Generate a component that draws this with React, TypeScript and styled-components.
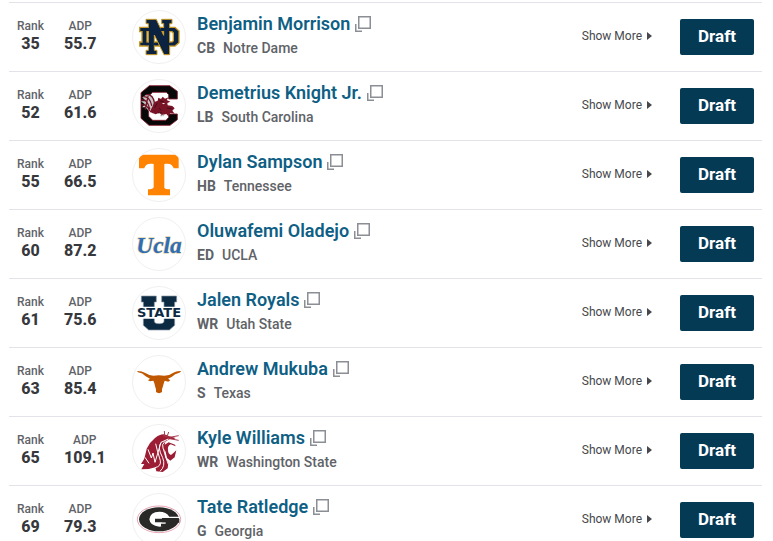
import React from "react";
import styled, { createGlobalStyle } from "styled-components";

const GlobalStyle = createGlobalStyle`
  * { box-sizing: border-box; }
  body {
    margin: 0;
    background: #fff;
    color: #5f6368;
    font-family: Roboto, "Liberation Sans", sans-serif;
  }
`;

const PlayerList = styled.ul`
  list-style: none;
  margin: 0;
  padding: 2px 11px 0 9px;
`;

const PlayerRow = styled.li`
  display: flex;
  align-items: center;
  height: 69px;
  border-top: 1px solid #e1e3e8;
`;

const Stats = styled.dl`
  display: flex;
  gap: 20px;
  width: 123px;
  margin: 0;
  padding: 0 0 2px 8px;
`;

const Stat = styled.div`
  text-align: center;
`;

const StatLabel = styled.dt`
  font-size: 12px;
  font-weight: 500;
  line-height: 16px;
`;

const StatValue = styled.dd`
  margin: 0;
  font-size: 16px;
  font-weight: 800;
  line-height: 20px;
  color: #36383c;
`;

const LogoCircle = styled.svg`
  flex: none;
  width: 54px;
  height: 54px;
  border: 1px solid #f0f0f1;
  border-radius: 50%;
`;

const Details = styled.div`
  flex: 1;
  min-width: 0;
  padding: 0 0 2px 11px;
`;

const NameLine = styled.div`
  display: flex;
  align-items: center;
  gap: 5px;
  height: 24px;
`;

const Name = styled.a`
  font-size: 18px;
  font-weight: 600;
  line-height: 24px;
  color: #0f5f85;
  text-decoration: none;
  white-space: nowrap;
`;

const PopoutButton = styled.button`
  display: flex;
  padding: 0;
  border: 0;
  background: none;
  color: #8b8e94;
  cursor: pointer;
`;

const SchoolLine = styled.div`
  display: flex;
  gap: 8px;
  font-size: 14px;
  font-weight: 500;
  line-height: 24px;
`;

const Position = styled.span`
  font-weight: 700;
`;

const ShowMore = styled.button`
  display: flex;
  align-items: center;
  gap: 5px;
  margin-right: 28px;
  padding: 0 0 2px;
  border: 0;
  background: none;
  color: #46484c;
  font: 400 12px/16px Roboto, "Liberation Sans", sans-serif;
  cursor: pointer;
`;

const DraftButton = styled.button`
  width: 74px;
  height: 36px;
  margin-right: 8px;
  padding: 0 0 2px;
  border: 0;
  border-radius: 2px;
  background: #053a55;
  color: #fff;
  font: 700 17px/20px Roboto, "Liberation Sans", sans-serif;
  cursor: pointer;
`;

const LogoWord = styled.text<{ $script?: boolean }>`
  font-family: ${(p) => (p.$script ? '"Liberation Serif", serif' : '"DejaVu Sans", sans-serif')};
  font-size: ${(p) => (p.$script ? "70px" : "39px")};
  font-style: ${(p) => (p.$script ? "italic" : "normal")};
  font-weight: 700;
  text-anchor: middle;
  paint-order: stroke;
`;

const NotreDame = () => (
  <>
    <path
      fill="#0b2341"
      stroke="#c99a25"
      strokeWidth="4"
      fillRule="evenodd"
      d="M32 64H138L150 75V110L138 120H32V108H39V77H32ZM54 77V108H129L133 104V81L129 77Z"
    />
    <path
      fill="#0b2341"
      stroke="#c99a25"
      strokeWidth="3"
      d="M51 40H82L104 88V53H98V40H129V53H122V146H105L76 87V133H84V146H51V133H58V53H51Z"
    />
    <path fill="#0b2341" d="M50 66H64V75H50ZM50 110H64V118H50ZM74 110H86V118H74ZM112 110H138V118H112ZM94 66H138V75H94Z" />
  </>
);

const SouthCarolina = () => (
  <>
    <path fill="#080808" stroke="#881b2c" strokeWidth="2.5" d="M61 32H122L145 49V72H119V59L112 52H71L59 63V124L71 136H111L119 127V117H145V134L123 151H60L36 130V53Z" />
    <path fill="#c8c4c6" d="M40 67L54 58L71 62L77 76L74 116L62 110L49 97L39 97L48 88L36 79L51 79Z" />
    <g fill="none" stroke="#761427" strokeWidth="4" strokeLinecap="round">
      <path d="M52 59Q71 57 76 82L72 113M44 65Q62 65 68 91M39 75Q54 72 62 101M39 90Q54 88 61 106M57 64L49 102" />
    </g>
    <path fill="#791326" d="M62 111L78 80L86 77L88 68L96 72L101 65L108 71L119 67L113 75L124 80L115 84L116 91L130 93L137 100L130 107L137 116L124 114L118 124L112 117L98 120L91 113L80 118L70 113Z" />
    <path stroke="#210d14" strokeWidth="2" fill="none" d="M77 98L85 84M92 78L104 80M87 114L98 113M114 99L128 101M90 100L97 106" />
    <path fill="#777" d="M95 119H98V124H95ZM101 119H106V121H103V124H101Z" />
    <path fill="#fff" d="M99 84L109 85L103 88Z" />
  </>
);

const Tennessee = () => (
  <path fill="#ff8200" d="M30 32H149V73H134C131 62 123 57 106 60V131Q108 136 123 136V154H57V136Q72 136 74 130V60C57 57 48 62 46 73H30Z" />
);

const Ucla = () => (
  <LogoWord $script x="90" y="120" fill="#2f6db8" stroke="#d6c68b" strokeWidth="3">
    Ucla
  </LogoWord>
);

const UtahState = () => (
  <>
    <path fill="#0d2a43" stroke="#8b98a4" strokeWidth="2" d="M37 42H82V60H76V118Q76 125 90 125Q105 125 105 118V60H98V42H143V60H137V130L121 144H59L43 130V60H37Z" />
    <path fill="#fff" d="M25 74H155V110H25Z" />
    <LogoWord x="90" y="106" fill="#0d2a43">
      STATE
    </LogoWord>
  </>
);

const Texas = () => (
  <path fill="#bf5700" d="M24 60Q40 60 49 66Q61 74 73 74Q90 71 106 74Q121 74 133 65Q142 59 157 60L151 65Q137 68 129 77L117 83L124 88L118 92L107 89L104 98L101 109L99 115V123Q90 130 81 123V115L79 109L76 97L73 89L63 91L57 88L63 83L50 76Q41 66 27 64Z" />
);

const WashingtonState = () => (
  <>
    <path fill="#9b1c33" d="M78 54Q93 42 105 43L114 46L121 49L140 54L133 58Q123 56 118 59L109 65L107 74L119 67L138 74L140 79L125 73Q115 78 117 90Q117 102 126 105L134 98L142 91L137 112L124 122L114 114L110 96L106 87L108 111L118 129L116 145L101 156L82 154L79 142L59 147L37 148L46 132L36 132L45 118L48 108L53 86L63 69Z" />
    <g fill="none" stroke="#fff" strokeWidth="3">
      <path d="M57 88L67 114L72 99L78 127L96 67L118 57M80 71L85 92M48 112L60 130M96 68Q84 82 101 113Q111 138 93 154M85 91L94 122Q97 139 78 143M108 64Q97 73 102 84Q113 119 118 133" />
    </g>
    <g fill="none" stroke="#a83b4e" strokeWidth="3">
      <path d="M107 48L106 33M114 50L119 36M122 52L149 47M122 56L149 61M102 47L121 52" />
    </g>
  </>
);

const Georgia = () => (
  <g transform="translate(0 -15)">
    <ellipse cx="90" cy="106" rx="65" ry="40" fill="#fff" stroke="#dc7891" strokeWidth="2" />
    <ellipse cx="90" cy="106" rx="60" ry="36" fill="#292927" />
    <path fill="#fff" d="M121 98H150V102H99V115H121Q113 128 91 128Q63 126 61 106Q63 84 91 83Q112 83 121 98Z" />
    <path fill="#292927" d="M78 104H151V116H121V128H96V119H110V115H78Z" />
  </g>
);

const players = [
  { rank: 35, adp: "55.7", name: "Benjamin Morrison", position: "CB", school: "Notre Dame", Logo: NotreDame },
  { rank: 52, adp: "61.6", name: "Demetrius Knight Jr.", position: "LB", school: "South Carolina", Logo: SouthCarolina },
  { rank: 55, adp: "66.5", name: "Dylan Sampson", position: "HB", school: "Tennessee", Logo: Tennessee },
  { rank: 60, adp: "87.2", name: "Oluwafemi Oladejo", position: "ED", school: "UCLA", Logo: Ucla },
  { rank: 61, adp: "75.6", name: "Jalen Royals", position: "WR", school: "Utah State", Logo: UtahState },
  { rank: 63, adp: "85.4", name: "Andrew Mukuba", position: "S", school: "Texas", Logo: Texas },
  { rank: 65, adp: "109.1", name: "Kyle Williams", position: "WR", school: "Washington State", Logo: WashingtonState },
  { rank: 69, adp: "79.3", name: "Tate Ratledge", position: "G", school: "Georgia", Logo: Georgia },
];

export default function App() {
  return (
    <>
      <GlobalStyle />
      <PlayerList>
        {players.map(({ rank, adp, name, position, school, Logo }) => (
          <PlayerRow key={rank}>
            <Stats>
              <Stat>
                <StatLabel>Rank</StatLabel>
                <StatValue>{rank}</StatValue>
              </Stat>
              <Stat>
                <StatLabel>ADP</StatLabel>
                <StatValue>{adp}</StatValue>
              </Stat>
            </Stats>
            <LogoCircle viewBox="12 15 156 156" role="img" aria-label={school}>
              <Logo />
            </LogoCircle>
            <Details>
              <NameLine>
                <Name href="#">{name}</Name>
                <PopoutButton aria-label={`Open ${name}`}>
                  <svg width="16" height="16" viewBox="0 0 16 16" fill="none" stroke="currentColor" aria-hidden="true">
                    <path strokeWidth="1.5" d="M3.75 0.75H15.25V12.25H3.75Z" />
                    <path strokeWidth="1.5" d="M0.75 8V15.25H7" />
                  </svg>
                </PopoutButton>
              </NameLine>
              <SchoolLine>
                <Position>{position}</Position>
                <span>{school}</span>
              </SchoolLine>
            </Details>
            <ShowMore>
              Show More
              <svg width="5" height="8" viewBox="0 0 5 8" fill="currentColor" aria-hidden="true">
                <path d="M0 0L5 4L0 8Z" />
              </svg>
            </ShowMore>
            <DraftButton>Draft</DraftButton>
          </PlayerRow>
        ))}
      </PlayerList>
    </>
  );
}
